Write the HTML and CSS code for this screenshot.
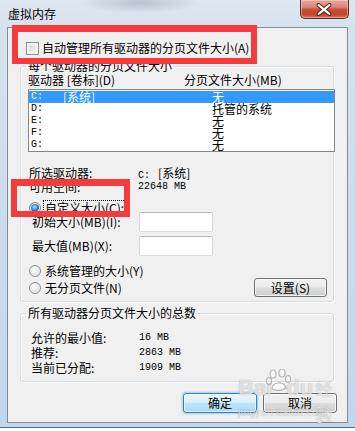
FILE: index.html
```html
<!DOCTYPE html>
<html lang="zh-CN">
<head>
<meta charset="utf-8">
<title>虚拟内存</title>
<link rel="stylesheet" href="styles.css">
</head>
<body>
<div class="window">
  <div class="titlebar">
    <span class="title">虚拟内存</span>
    <div class="close" aria-label="关闭">
      <svg width="49" height="19" viewBox="0 0 49 19">
        <path d="M19 5 L30 14 M30 5 L19 14" stroke="#4a1e19" stroke-width="4.2" stroke-linecap="round" fill="none"/>
        <path d="M19 5 L30 14 M30 5 L19 14" stroke="#ffffff" stroke-width="2.2" stroke-linecap="round" fill="none"/>
      </svg>
    </div>
  </div>
  <div class="client">
    <div class="check-row"><span class="checkbox"></span><span>自动管理所有驱动器的分页文件大小(A)</span></div>

    <fieldset class="group g1">
      <legend>每个驱动器的分页文件大小</legend>
      <div class="list-head"><span>驱动器 [卷标](D)</span><span>分页文件大小(MB)</span></div>
      <div class="listbox">
        <div class="row sel"><span class="drv">C:</span><span class="vol">[系统]</span><span class="size">无</span></div>
        <div class="row"><span class="drv">D:</span><span class="vol"></span><span class="size">托管的系统</span></div>
        <div class="row"><span class="drv">E:</span><span class="vol"></span><span class="size">无</span></div>
        <div class="row"><span class="drv">F:</span><span class="vol"></span><span class="size">无</span></div>
        <div class="row"><span class="drv">G:</span><span class="vol"></span><span class="size">无</span></div>
      </div>
      <div class="info">
        <span>所选驱动器:</span><span><span class="mono">C:</span>&nbsp;&nbsp;&nbsp;[系统]</span>
        <span>可用空间:</span><span class="mono">22648 MB</span>
      </div>
      <div class="radio-row custom"><span class="radio on"></span><span class="focus">自定义大小(C):</span></div>
      <div class="field-row first"><span>初始大小(MB)(I):</span><span class="input"></span></div>
      <div class="field-row"><span>最大值(MB)(X):</span><span class="input"></span></div>
      <div class="radio-row sys"><span class="radio"></span><span>系统管理的大小(Y)</span></div>
      <div class="radio-row nofile"><span class="radio"></span><span>无分页文件(N)</span><span class="btn set">设置(S)</span></div>
    </fieldset>

    <fieldset class="group g2">
      <legend>所有驱动器分页文件大小的总数</legend>
      <div class="totals">
        <span>允许的最小值:</span><span class="mono">16 MB</span>
        <span>推荐:</span><span class="mono">2863 MB</span>
        <span>当前已分配:</span><span class="mono">1909 MB</span>
      </div>
    </fieldset>

    <div class="actions"><span class="btn default">确定</span><span class="btn">取消</span></div>
  </div>

  <div class="redbox rb1"></div>
  <div class="redbox rb2"></div>

  <div class="watermark">
    <span class="wm-main">Bai<svg class="paw" width="26" height="22" viewBox="0 0 26 22"><g fill="rgba(255,255,255,0.5)" stroke="rgba(110,110,110,0.45)" stroke-width="1.2"><ellipse cx="7" cy="5" rx="3" ry="4"/><ellipse cx="16" cy="4" rx="3" ry="4"/><ellipse cx="3" cy="12" rx="2.6" ry="3.4"/><ellipse cx="22" cy="10" rx="2.6" ry="3.4"/><path d="M6 20 C6 13 18 11 20 19 C17 22 9 22 6 20 Z"/></g></svg>du<span class="wm-cn">经验</span></span>
    <span class="wm-sub">jingyan.baidu.com</span>
  </div>
</div>
</body>
</html>
```

FILE: styles.css
```css
* { box-sizing: border-box; }
html, body { margin: 0; padding: 0; }
body {
  width: 355px;
  height: 431px;
  overflow: hidden;
  background: #ffffff;
  font-family: "Noto Sans CJK SC", "Liberation Sans", sans-serif;
  font-size: 12px;
  color: #000;
}
.window {
  position: relative;
  width: 355px;
  height: 428px;
  padding: 0 7px 4px 7px;
  display: flex;
  flex-direction: column;
  background:
    radial-gradient(ellipse 60px 10px at 140px 3px, rgba(120,130,145,0.35), rgba(120,130,145,0) 100%),
    linear-gradient(to bottom, #dde7f1 0px, #d6e2ee 27px, #c9dbed 60%, #c2d7ec 100%);
  border-bottom: 1px solid #58697d;
}
.titlebar {
  height: 27px;
  display: flex;
  justify-content: space-between;
  align-items: flex-start;
  flex-shrink: 0;
}
.title {
  margin: 6px 0 0 1px;
  line-height: 16px;
  color: #000;
}
.close {
  width: 49px;
  height: 19px;
  margin-right: -1px;
  border: 1px solid #5e2a25;
  border-top: none;
  border-radius: 0 0 5px 5px;
  background: linear-gradient(to bottom, #e7a99c 0%, #d78676 40%, #c74f3b 52%, #c5432e 80%, #d8745c 100%);
  box-shadow: inset 0 0 0 1px rgba(255,220,210,0.45);
  display: flex;
}
.close svg { display: block; margin-left: -1px; }

.client {
  width: 341px;
  height: 396px;
  border: 1px solid #7d8ea3;
  background: #f0f0f0;
  padding: 13px 0 0 12px;
  display: flex;
  flex-direction: column;
}
.check-row {
  height: 14px;
  display: flex;
  align-items: center;
  padding-left: 6px;
  gap: 3px;
  line-height: 14px;
}
.checkbox {
  width: 13px;
  height: 13px;
  border: 1px solid #8e8f8f;
  background: linear-gradient(135deg, #d8d8d8, #f6f6f6);
  box-shadow: inset 0 0 0 2px #f4f4f4;
  flex-shrink: 0;
}

.group {
  margin: 0 13px 0 0;
  min-width: 0;
  border: 1px solid #d3dce3;
  border-radius: 3px;
  box-shadow: 1px 1px 0 #ffffff, inset 1px 1px 0 #ffffff;
}
.group legend {
  line-height: 14px;
  padding: 0 2px;
  color: #000;
}
.g1 {
  margin-top: 4px;
  padding: 0 0 4px 7px;
}
.g1 legend { margin-left: -2px; }
.g2 {
  margin-top: 4px;
  padding: 10px 0 6px 10px;
}
.g2 legend { margin-left: -5px; }

.list-head {
  display: grid;
  grid-template-columns: 156px 1fr;
  line-height: 14px;
  height: 14px;
}
.listbox {
  margin-top: 2px;
  margin-right: -2px;
  height: 63px;
  border: 1px solid #828790;
  background: #ffffff;
  padding-top: 1px;
}
.row {
  height: 12px;
  line-height: 12px;
  display: grid;
  grid-template-columns: 32px 149px 1fr;
  padding-left: 2px;
}
.row.sel { background: #3399ff; color: #ffffff; }
.drv {
  font-family: "Liberation Mono", monospace;
  font-size: 10px;
}
.mono {
  font-family: "Liberation Mono", monospace;
  font-size: 10px;
}

.info {
  margin-top: 14px;
  padding-left: 1px;
  display: grid;
  grid-template-columns: 109px 1fr;
  grid-auto-rows: 14px;
  line-height: 14px;
}
.radio-row {
  display: flex;
  align-items: center;
  padding-left: 1px;
  gap: 4px;
  height: 14px;
  line-height: 14px;
}
.radio-row.custom { margin-top: 7px; }
.radio-row.sys { margin-top: 8px; }
.radio-row.nofile { height: 19px; }
.radio {
  width: 12px;
  height: 12px;
  border-radius: 50%;
  border: 1px solid #8a8c8e;
  background: radial-gradient(circle at 40% 35%, #ffffff 0%, #e6e6e6 55%, #cfcfcf 100%);
  box-shadow: inset 0 0 0 1px #f3f3f3;
  flex-shrink: 0;
}
.radio.on {
  background:
    radial-gradient(circle at 45% 40%, #bfe6ff 0%, #3d9ae6 30%, #1565b8 55%, rgba(21,101,184,0) 60%),
    radial-gradient(circle at 40% 35%, #ffffff 0%, #e6e6e6 55%, #cfcfcf 100%);
}
.focus {
  outline: 1px dotted #000;
  outline-offset: 0;
  padding: 0 1px;
  margin-left: -1px;
}
.field-row {
  display: grid;
  grid-template-columns: 107px 74px;
  align-items: center;
  height: 20px;
  padding-left: 4px;
  margin-top: 4px;
  line-height: 14px;
}
.field-row.first { margin-top: -3px; }
.input {
  height: 20px;
  background: #ffffff;
  border: 1px solid #d4d8de;
  border-top-color: #b5b9c0;
  border-radius: 2px;
}

.btn {
  display: flex;
  align-items: center;
  justify-content: center;
  width: 74px;
  height: 20px;
  border: 1px solid #707070;
  border-radius: 3px;
  background: linear-gradient(to bottom, #f2f2f2 0%, #ebebeb 48%, #dddddd 52%, #cfcfcf 100%);
  box-shadow: inset 0 0 0 1px rgba(255,255,255,0.7);
  line-height: 14px;
}
.btn.set { margin-left: auto; margin-right: 6px; width: 73px; height: 19px; }
.btn.default {
  border-color: #3c7fb1;
  background: linear-gradient(to bottom, #e8f6fd 0%, #d8effb 48%, #bde6fd 52%, #a7d9f5 100%);
  box-shadow: inset 0 0 0 1px rgba(255,255,255,0.6), 0 0 2px 1px rgba(80,180,240,0.5);
}

.totals {
  display: grid;
  grid-template-columns: 108px 1fr;
  grid-auto-rows: 15px;
  line-height: 15px;
}
.actions {
  margin-top: 11px;
  margin-right: 10px;
  display: flex;
  justify-content: flex-end;
  gap: 6px;
}

.redbox {
  position: absolute;
  border-style: solid;
  border-color: #f53c3c;
  pointer-events: none;
}
.rb1 { left: 12px; top: 25px; width: 245px; height: 39px; border-width: 7px 6px 6px 6px; }
.rb2 { left: 11px; top: 179px; width: 119px; height: 38px; border-width: 7px 6px 6px 6px; }

.watermark {
  position: absolute;
  left: 238px;
  top: 375px;
  width: 110px;
  height: 46px;
  display: flex;
  flex-direction: column;
  pointer-events: none;
}
.wm-main {
  font-family: "Liberation Sans", sans-serif;
  font-weight: bold;
  font-size: 22px;
  line-height: 26px;
  height: 26px;
  color: rgba(255,255,255,0.7);
  text-shadow: 0 0 1px rgba(80,80,80,0.55);
  display: flex;
  align-items: flex-start;
}
.paw { margin: -6px -6px 0 -6px; flex-shrink: 0; }
.wm-cn {
  font-family: "Noto Sans CJK SC", sans-serif;
  font-size: 17px;
  line-height: 26px;
  font-weight: normal;
  margin-left: 2px;
}
.wm-sub {
  font-family: "Liberation Sans", sans-serif;
  font-size: 10px;
  line-height: 12px;
  height: 12px;
  color: rgba(255,255,255,0.65);
  text-shadow: 0 0 1px rgba(80,80,80,0.5);
  margin-top: 6px;
  letter-spacing: 0.5px;
}
```
